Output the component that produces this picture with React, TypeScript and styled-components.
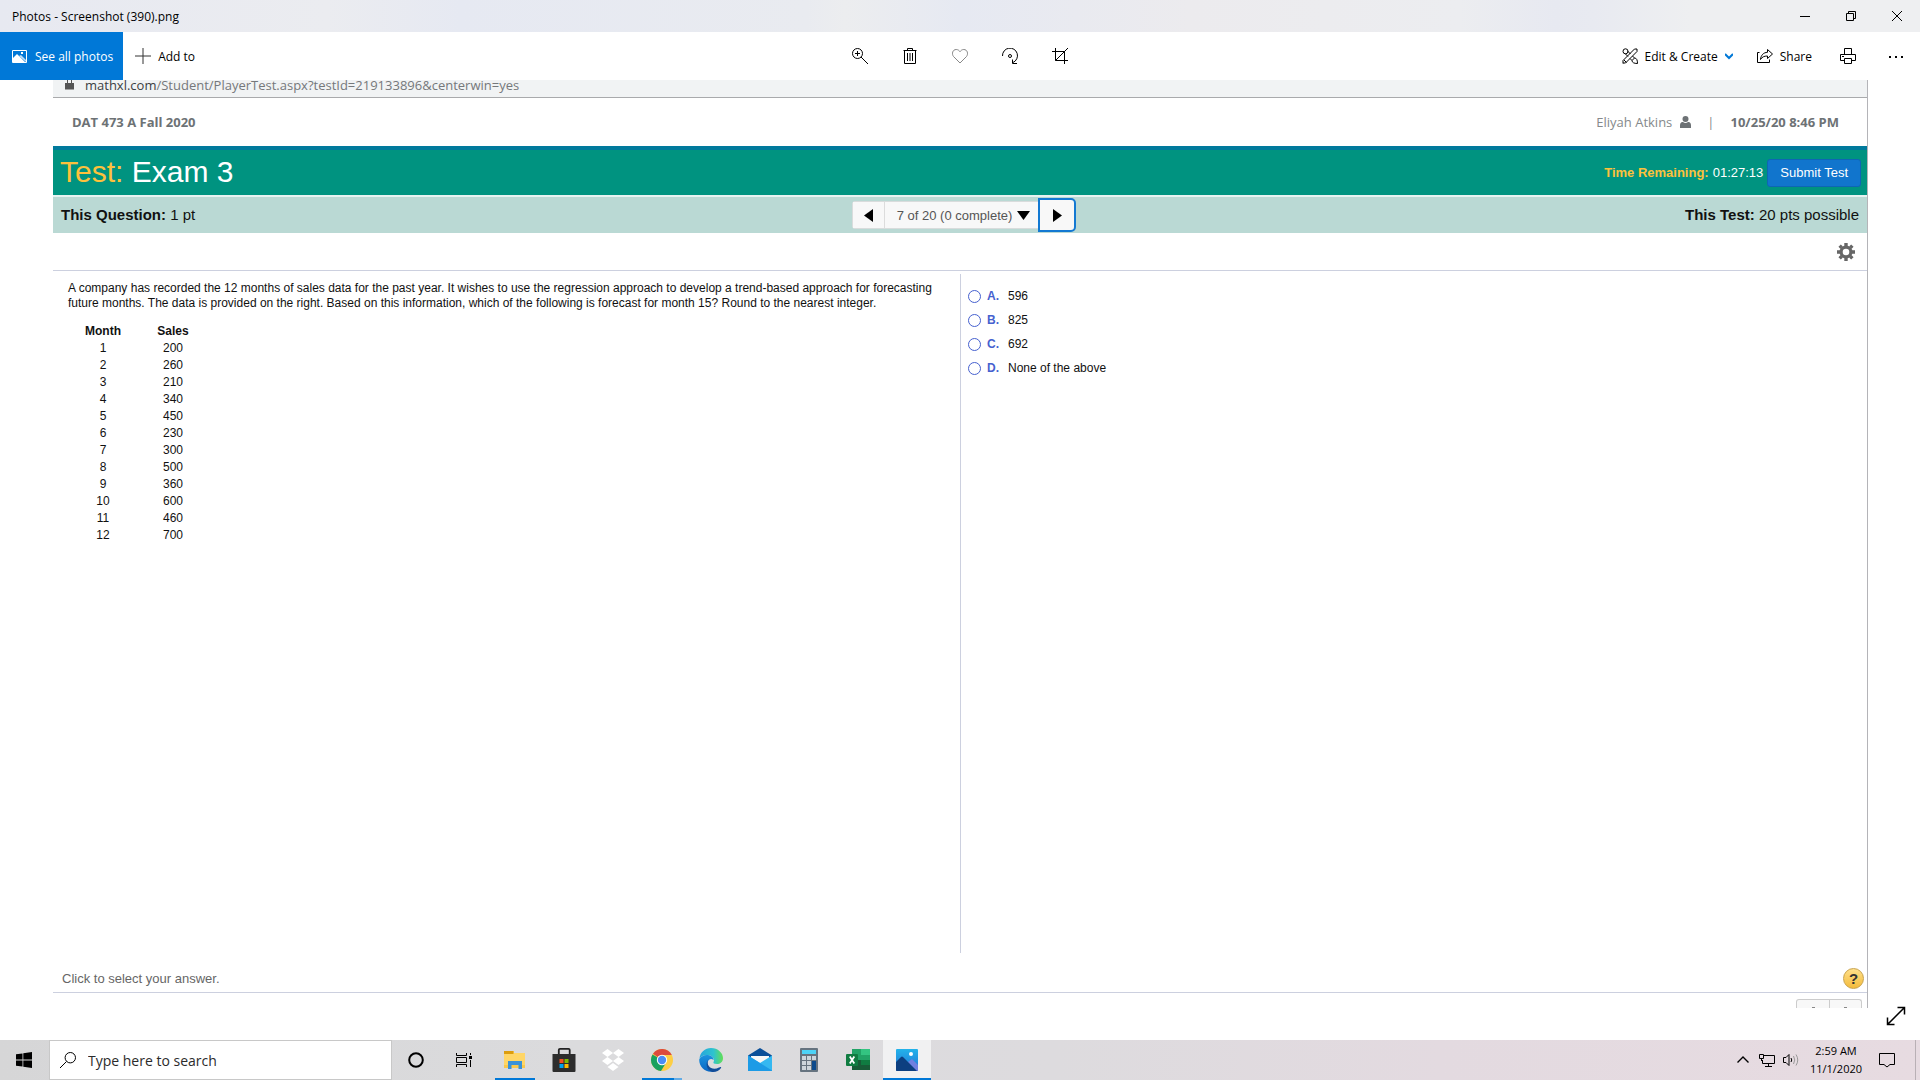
import React from 'react';
import styled, { createGlobalStyle } from 'styled-components';

const ui = '"Open Sans", "Noto Sans", sans-serif';
const arial = '"Liberation Sans", Arial, sans-serif';

const GlobalStyle = createGlobalStyle`
  *, *::before, *::after { box-sizing: border-box; }
  body { margin: 0; background: #fff; color: #000; font-family: ${ui}; font-size: 12px; }
  button, input { font: inherit; color: inherit; }
  button { border: 0; padding: 0; background: none; cursor: pointer; }
  svg { display: block; flex: none; }
`;

const Window = styled.div`
  min-height: 100vh;
  display: flex;
  flex-direction: column;
`;

const TitleBar = styled.header`
  height: 32px;
  display: flex;
  justify-content: space-between;
  align-items: center;
  padding-left: 12px;
  background: linear-gradient(90deg, #e7e9f1 0%, #ebecf0 17%, #e6e9f2 24%, #e9ebf0 42%, #ecedef 44%, #e6e9f2 50%, #ecebee 62%, #ecedf0 76%, #e7e9f1 81%, #e8eaf1 83%, #eeeff1 88%, #eeeff1 100%);
`;

const WindowTitle = styled.h1`
  margin: 0;
  font-size: 12px;
  font-weight: 400;
`;

const Row = styled.div`
  display: flex;
  align-items: center;
`;

const CaptionButton = styled.button`
  width: 46px;
  height: 32px;
  display: grid;
  place-items: center;
`;

const Toolbar = styled.nav`
  height: 48px;
  display: grid;
  grid-template-columns: 1fr auto 1fr;
  align-items: center;
  font-size: 12px;
`;

const SeeAll = styled.button`
  height: 48px;
  padding: 0 10px 0 12px;
  display: flex;
  align-items: center;
  gap: 8px;
  background: #0078d7;
  color: #fff;
  white-space: nowrap;
`;

const ToolButton = styled.button<{ $w?: number }>`
  height: 48px;
  ${p => (p.$w ? `width: ${p.$w}px;` : 'padding: 0 12px;')}
  display: flex;
  align-items: center;
  justify-content: center;
  gap: 7px;
  white-space: nowrap;
`;

const EndTools = styled(Row)`
  justify-content: flex-end;
`;

const Viewer = styled.main`
  position: relative;
  flex: 1;
  display: flex;
  padding: 0 52px 32px 53px;
`;

const Expand = styled.button`
  position: absolute;
  right: 14px;
  bottom: 14px;
`;

const Photo = styled.article`
  flex: 1;
  display: flex;
  flex-direction: column;
  overflow: hidden;
  border-right: 1px solid #b4b4b8;
  font-family: ${arial};
`;

const AddressBar = styled.div`
  height: 18px;
  display: flex;
  align-items: flex-start;
  gap: 11px;
  padding-left: 12px;
  overflow: hidden;
  background: #f1f3f4;
  border-bottom: 1px solid #a9aaac;
  color: #75787b;
  font: 13px/10px ${ui};
  b { font-weight: 400; color: #3c4043; }
`;

const CourseBar = styled.div`
  height: 48px;
  display: flex;
  align-items: center;
  justify-content: space-between;
  padding: 0 28px 0 19px;
  color: #6d7275;
  font: 13px/20px ${ui};
`;

const UserInfo = styled(Row)`
  gap: 8px;
  color: #85898b;
  b { color: #6d7275; }
`;

const Divider = styled.span`
  padding: 0 8px;
`;

const ExamBar = styled.div`
  height: 49px;
  display: flex;
  align-items: center;
  justify-content: space-between;
  padding: 0 6px 0 7px;
  background: #009380;
  border-top: 4px solid #007a9c;
  color: #fff;
`;

const ExamTitle = styled.h2`
  margin: 0;
  padding-bottom: 2px;
  font-size: 30px;
  font-weight: 400;
  span { color: #fdc13c; }
`;

const Timer = styled(Row)`
  gap: 4px;
  font-size: 13px;
  b { color: #fdc13c; }
`;

const Submit = styled.button`
  height: 28px;
  padding: 0 12px;
  background: #1175cd;
  border: 1px solid #0e66b4;
  border-radius: 3px;
`;

const QuestionBar = styled.div`
  height: 38px;
  display: grid;
  grid-template-columns: 1fr auto 1fr;
  align-items: center;
  padding: 0 8px;
  background: #bad9d4;
  border-top: 2px solid #e6f3f1;
  color: #111;
  font-size: 15px;
`;

const Points = styled.div<{ $end?: boolean }>`
  padding-bottom: 2px;
  text-align: ${p => (p.$end ? 'right' : 'left')};
`;

const Pager = styled(Row)`
  height: 28px;
  margin-left: 8px;
  background: #f8f8f8;
  border: 1px solid #d9dcdc;
  border-radius: 3px;
  color: #555;
  font-size: 13px;
`;

const PageButton = styled.button<{ $focus?: boolean }>`
  width: ${p => (p.$focus ? 38 : 32)}px;
  height: ${p => (p.$focus ? 34 : 26)}px;
  display: grid;
  place-items: center;
  background: #f8f8f8;
  ${p => p.$focus
    ? 'border: 2px solid #1379d2; border-radius: 0 5px 5px 0; margin-right: -1px;'
    : 'border-right: 1px solid #dcdcdc;'}
`;

const PageSelect = styled.button`
  height: 26px;
  display: flex;
  align-items: center;
  gap: 5px;
  padding: 0 8px 0 12px;
`;

const Settings = styled.div`
  height: 38px;
  display: flex;
  align-items: center;
  justify-content: flex-end;
  padding-right: 12px;
  border-bottom: 1px solid #ccd0df;
`;

const Columns = styled.div`
  flex: 1;
  display: grid;
  grid-template-columns: 1fr 1fr;
  padding: 3px 0 0;
`;

const Problem = styled.section`
  padding: 7px 0 0 15px;
  font-size: 12px;
  color: #111;
`;

const Prompt = styled.p`
  margin: 0 0 12px;
  line-height: 15px;
`;

const Data = styled.table`
  border-collapse: collapse;
  line-height: 17px;
  text-align: center;
  th, td { width: 70px; padding: 0; }
`;

const Choices = styled.form`
  padding: 10px 7px;
  border-left: 1px solid #ccd0df;
  font-size: 12px;
  line-height: 24px;
  color: #111;
`;

const Choice = styled.label`
  display: flex;
  align-items: center;
  b { width: 21px; margin-left: 6px; color: #4661cf; }
`;

const Radio = styled.input`
  appearance: none;
  width: 13px;
  height: 13px;
  margin: 0;
  border: 1px solid #4661cf;
  border-radius: 50%;
  background: #fff;
  &:checked { background: radial-gradient(#4661cf 45%, #fff 50%); }
`;

const Hint = styled.div`
  height: 40px;
  display: flex;
  align-items: center;
  justify-content: space-between;
  padding: 12px 3px 0 9px;
  border-bottom: 1px solid #ccd0df;
  color: #666;
  font-size: 13px;
`;

const Help = styled.button`
  width: 21px;
  height: 21px;
  border: 1px solid #c9a24a;
  border-radius: 50%;
  background: linear-gradient(#ffe08a, #f3bb3c);
  color: #333;
  font: bold 15px/19px ${arial};
`;

const PhotoEnd = styled.div`
  height: 15px;
  display: flex;
  justify-content: flex-end;
  padding: 6px 5px 0 0;
`;

const Stub = styled.div`
  width: 66px;
  display: grid;
  grid-template-columns: 1fr 1fr;
  border: 1px solid #ccc;
  border-bottom: 0;
  border-radius: 3px 3px 0 0;
  background: #f8f8f8;
`;

const StubCell = styled.span`
  display: grid;
  place-items: end center;
  & + & { border-left: 1px solid #ccc; }
  &::after { content: ''; width: 3px; height: 1px; background: #888; }
`;

const Taskbar = styled.footer`
  height: 40px;
  display: flex;
  background: linear-gradient(90deg, #d6d6d7 0%, #dbdbdd 30%, #dddbde 55%, #e3dae0 75%, #e7dbe1 100%);
`;

const Start = styled.button`
  width: 48px;
  margin-right: 1px;
  display: grid;
  place-items: center;
`;

const Search = styled.label`
  width: 343px;
  display: flex;
  align-items: center;
  gap: 12px;
  padding: 0 10px;
  background: #fff;
  border: 1px solid #c8c8c8;
`;

const SearchInput = styled.input`
  flex: 1;
  min-width: 0;
  border: 0;
  padding: 0;
  outline: 0;
  background: none;
  font-size: 14px;
  &::placeholder { color: #2b2b2b; opacity: 1; }
`;

const SystemButtons = styled.div`
  display: flex;
  margin-right: 3px;
`;

const Apps = styled.div`
  display: flex;
  gap: 1px;
`;

const TaskButton = styled.button<{ $open?: boolean; $active?: boolean; $stacked?: boolean }>`
  width: 48px;
  display: grid;
  place-items: center;
  background: ${p => (p.$active ? '#f1f1f2' : 'none')};
  box-shadow: ${p => (p.$active ? 'inset 0 -2px #0078d7' : 'none')};
  ${p => p.$open && `
    background: linear-gradient(90deg, #0078d7 ${p.$stacked ? '80%, #62abe6 80%' : '100%'}) center bottom / 40px 2px no-repeat;
  `}
`;

const Tray = styled(Row)`
  margin-left: auto;
  gap: 8px;
`;

const Clock = styled.time`
  width: 58px;
  text-align: center;
  font-size: 11px;
  line-height: 18px;
`;

const Notify = styled.button`
  width: 28px;
  height: 40px;
  display: grid;
  place-items: center;
`;

const ShowDesktop = styled.div`
  width: 5px;
  height: 40px;
  margin-left: 6px;
  border-left: 1px solid #b9b0b5;
`;

function Line({ d, size = 16, color = '#000', w = 1, children }: {
  d?: string; size?: number; color?: string; w?: number; children?: React.ReactNode;
}) {
  return (
    <svg width={size} height={size} viewBox={`0 0 ${size} ${size}`} fill="none" stroke={color} strokeWidth={w} aria-hidden="true">
      {d && <path d={d} />}
      {children}
    </svg>
  );
}

const sales = [200, 260, 210, 340, 450, 230, 300, 500, 360, 600, 460, 700];
const choices = [['A', '596'], ['B', '825'], ['C', '692'], ['D', 'None of the above']];

function Triangle({ d, w, h }: { d: string; w: number; h: number }) {
  return <svg width={w} height={h} viewBox={`0 0 ${w} ${h}`} aria-hidden="true"><path d={d} fill="#000" /></svg>;
}

function TopBars() {
  return (
    <>
      <TitleBar>
        <WindowTitle>Photos - Screenshot (390).png</WindowTitle>
        <Row>
          <CaptionButton aria-label="Minimize"><Line size={10} d="M0 5.5H10" /></CaptionButton>
          <CaptionButton aria-label="Restore"><Line size={10} d="M.5 2.5H7.5V9.5H.5ZM2.5 2.5V.5H9.5V7.5H7.5" /></CaptionButton>
          <CaptionButton aria-label="Close"><Line size={10} d="M0 0L10 10M10 0L0 10" /></CaptionButton>
        </Row>
      </TitleBar>
      <Toolbar>
        <Row>
          <SeeAll>
            <svg width="15" height="15" viewBox="0 0 15 15" aria-hidden="true">
              <path d="M.5 1.5H14.500V13.500H.5Z" fill="none" stroke="#fff" />
              <path d="M1 9L5 5L13 13H1Z" fill="#fff" />
              <path d="M7 7L9 6L14 11V13Z" fill="#fff" opacity=".75" />
              <rect x="9" y="3" width="2" height="2" fill="#fff" />
            </svg>
            See all photos
          </SeeAll>
          <ToolButton><Line d="M8 0V16M0 8H16" color="#333" />Add to</ToolButton>
        </Row>
        <Row>
          <ToolButton $w={50} aria-label="Zoom"><Line d="M9 9L16 16M3 5.500H8M5.500 3V8"><circle cx="5.500" cy="5.500" r="5" /></Line></ToolButton>
          <ToolButton $w={50} aria-label="Delete"><Line d="M1.500 2.500H14.500M5.500 2.500V.5H10.500V2.500M2.500 2.500V15.500H13.500V2.500M5.500 5V13M8 5V13M10.500 5V13" /></ToolButton>
          <ToolButton $w={50} aria-label="Favorite"><Line color="#888" d="M8 15L1.500 8.500C-.5 6 .5 1.500 4.200 1.500C6 1.500 7.200 2.500 8 3.700C8.800 2.500 10 1.500 11.800 1.500C15.500 1.500 16.500 6 14.500 8.500Z" /></ToolButton>
          <ToolButton $w={50} aria-label="Rotate"><Line d="M.5 8A7.500 7.500 0 1 1 11 14.500M15 15.500H10.500V11.500"><circle cx="8" cy="8" r="1.500" /></Line></ToolButton>
          <ToolButton $w={50} aria-label="Crop"><Line d="M3.500 0V12.500H16M0 3.500H12.500V16M3.500 12.500L16 0" /></ToolButton>
        </Row>
        <EndTools>
          <ToolButton>
            <Line d="M1 15.500V12.500L12.500 1L15 1V3.500L3.500 15H1M2 12L4.500 14.500M3 5.500L6 8.500M5.500 3L8.500 6M8 10.500L10 12.500M10.500 8L12.500 10M10 12.500C10 14.500 12 15.500 15.500 15.500C15.500 12 14.500 10 12.500 10Z"><circle cx="3.500" cy="3.300" r="2.500" /></Line>
            Edit &amp; Create
            <Line size={8} d="M0 2L4 6L8 2" color="#0078d7" w={2} />
          </ToolButton>
          <ToolButton>
            <Line d="M2.500 4.500H.5V14.500H12.500V11.500M10.500 1.500L15.500 6L10.500 10.500V8C7 8 5 9 3.500 11.500C4 7 6.500 4.500 10.500 4.300Z" />
            Share
          </ToolButton>
          <ToolButton $w={48} aria-label="Print"><Line d="M4.500 6V.5H11.500V6M4.500 12.500H.5V6.500H15.500V12.500H11.500M4.500 10.500H11.500V15.500H4.500ZM2 8.500H4" /></ToolButton>
          <ToolButton $w={48} aria-label="See more">
            <svg width="14" height="16" viewBox="0 0 14 16" aria-hidden="true"><path d="M0 8h2v2H0zM6 8h2v2H6zM12 8h2v2H12z" /></svg>
          </ToolButton>
        </EndTools>
      </Toolbar>
    </>
  );
}

function Exam() {
  return (
    <Photo>
      <AddressBar>
        <svg width="9" height="11" viewBox="0 0 9 11" aria-hidden="true"><path d="M0 3H9V9.500H0Z" fill="#555" /><path d="M2.500 4V0M6.500 4V0" stroke="#555" /></svg>
        <span><b>mathxl.com</b>/Student/PlayerTest.aspx?testId=219133896&amp;centerwin=yes</span>
      </AddressBar>
      <CourseBar>
        <b>DAT 473 A Fall 2020</b>
        <UserInfo>
          Eliyah Atkins
          <svg width="11" height="12" viewBox="0 0 11 12" fill="#6d7275" aria-hidden="true"><circle cx="5.500" cy="3" r="3" /><path d="M0 12V9C0 6.500 2 6 3 6Q5.500 8 8 6C9 6 11 6.500 11 9V12Z" /></svg>
          <Divider>|</Divider>
          <b>10/25/20 8:46 PM</b>
        </UserInfo>
      </CourseBar>
      <ExamBar>
        <ExamTitle><span>Test:</span> Exam 3</ExamTitle>
        <Timer><b>Time Remaining:</b>01:27:13<Submit>Submit Test</Submit></Timer>
      </ExamBar>
      <QuestionBar>
        <Points><b>This Question:</b> 1 pt</Points>
        <Pager>
          <PageButton aria-label="Previous question"><Triangle w={9} h={13} d="M9 0V13L0 6.500Z" /></PageButton>
          <PageSelect>7 of 20 (0 complete)<Triangle w={13} h={9} d="M0 0H13L6.500 9Z" /></PageSelect>
          <PageButton $focus aria-label="Next question"><Triangle w={9} h={13} d="M0 0L9 6.500L0 13Z" /></PageButton>
        </Pager>
        <Points $end><b>This Test:</b> 20 pts possible</Points>
      </QuestionBar>
      <Settings>
        <button aria-label="Settings">
          <svg width="18" height="18" viewBox="-9 -9 18 18" aria-hidden="true">
            <circle r="4.900" fill="none" stroke="#666" strokeWidth="3.200" />
            {[0, 45, 90, 135].map(a => <path key={a} d="M-1.700 -9H1.700V-6H-1.700ZM-1.700 9H1.700V6H-1.700Z" fill="#666" transform={`rotate(${a})`} />)}
          </svg>
        </button>
      </Settings>
      <Columns>
        <Problem>
          <Prompt>A company has recorded the 12 months of sales data for the past year. It wishes to use the regression approach to develop a trend-based approach for forecasting future months. The data is provided on the right. Based on this information, which of the following is forecast for month 15? Round to the nearest integer.</Prompt>
          <Data>
            <thead><tr><th>Month</th><th>Sales</th></tr></thead>
            <tbody>{sales.map((s, i) => <tr key={i}><td>{i + 1}</td><td>{s}</td></tr>)}</tbody>
          </Data>
        </Problem>
        <Choices>
          {choices.map(([k, t]) => <Choice key={k}><Radio type="radio" name="answer" value={k} /><b>{k}.</b>{t}</Choice>)}
        </Choices>
      </Columns>
      <Hint>Click to select your answer.<Help aria-label="Help">?</Help></Hint>
      <PhotoEnd><Stub><StubCell /><StubCell /></Stub></PhotoEnd>
    </Photo>
  );
}

function Icon({ children }: { children: React.ReactNode }) {
  return <svg width="24" height="26" viewBox="0 0 24 26" aria-hidden="true">{children}</svg>;
}

function Tasks() {
  return (
    <Taskbar>
      <Start aria-label="Start">
        <svg width="16" height="16" viewBox="0 0 16 16" aria-hidden="true"><path d="M0 2.300L6.500 1.400V7.600H0ZM7.300 1.300L16 0V7.600H7.300ZM0 8.400H6.500V14.600L0 13.700ZM7.300 8.400H16V16L7.300 14.700Z" /></svg>
      </Start>
      <Search>
        <Line d="M6.500 9.500L0 16"><circle cx="10.300" cy="5.700" r="5.200" /></Line>
        <SearchInput placeholder="Type here to search" aria-label="Search" />
      </Search>
      <SystemButtons>
        <TaskButton aria-label="Cortana"><Line w={2}><circle cx="8" cy="8" r="6.800" /></Line></TaskButton>
        <TaskButton aria-label="Task View"><Line d="M.5 1V3.500H10.500V1M.5 15V12.500H10.500V15M.5 5.500H10.500V10.500H.5ZM14.500 1V3M14.500 8V15"><rect x="13" y="4" width="3" height="3" fill="#000" stroke="none" /></Line></TaskButton>
      </SystemButtons>
      <Apps>
        <TaskButton $open aria-label="File Explorer"><Icon>
          <path d="M1 4H11V6H22V21H1Z" fill="#ffd667" /><path d="M1 4H10.500V7H1Z" fill="#dc9d0e" />
          <path d="M1 18H22V21H1Z" fill="#fac84c" /><path d="M5 14H19V22H15.500V18H8.500V22H5Z" fill="#3a92d9" />
        </Icon></TaskButton>
        <TaskButton aria-label="Microsoft Store"><Icon>
          <path d="M6.800 8V3Q6.800 1.800 8 1.800H16.500Q17.700 1.800 17.700 3V8" fill="none" stroke="#222" strokeWidth="1.800" />
          <path d="M.5 7H23.500V24Q23.500 25 22.500 25H1.500Q.5 25 .5 24Z" fill="#2d2d2d" />
          <path d="M7.500 12H11.500V16H7.500Z" fill="#f25022" /><path d="M12.500 12H16.500V16H12.500Z" fill="#7fba00" /><path d="M7.500 17H11.500V21H7.500Z" fill="#00a4ef" /><path d="M12.500 17H16.500V21H12.500Z" fill="#ffb900" />
        </Icon></TaskButton>
        <TaskButton aria-label="Dropbox"><Icon><path d="M6.500 2L12 6L6.500 10L1 6ZM17.500 2L23 6L17.500 10L12 6ZM6.500 10L12 14L6.500 18L1 14ZM17.500 10L23 14L17.500 18L12 14ZM12 16L17.500 20L12 24L6.500 20Z" fill="#fff" /></Icon></TaskButton>
        <TaskButton $open $stacked aria-label="Chrome"><Icon>
          <circle cx="12" cy="13" r="11" fill="#fdce45" />
          <path d="M12 13L2.500 7.500A11 11 0 0 0 11 24L16.500 15Z" fill="#18a15f" />
          <path d="M12 13L3 6.700A11 11 0 0 1 21.800 8H12Z" fill="#dc4a3e" />
          <circle cx="12" cy="13" r="5.200" fill="#fff" /><circle cx="12" cy="13" r="4.200" fill="#4c8df5" />
        </Icon></TaskButton>
        <TaskButton aria-label="Edge"><Icon>
          <defs>
            <linearGradient id="edgeTop" x1="0" x2="1"><stop stopColor="#25a5dc" /><stop offset=".6" stopColor="#2ec3cf" /><stop offset="1" stopColor="#63df53" /></linearGradient>
            <linearGradient id="edgeLow" x1="0" x2="0" y1="0" y2="1"><stop stopColor="#1a94e0" /><stop offset="1" stopColor="#0b66c2" /></linearGradient>
          </defs>
          <path d="M.5 12C1 5 6 1 12 1C19 1 24 6 24 11C24 15 21 17 18 17C15 17 14 16 14.500 15C15.500 14 15.500 9 9.500 8C5.500 7.500 2 9 .5 12Z" fill="url(#edgeTop)" />
          <path d="M.2 12.500C2 9 5.500 7.500 9 8C13 8.500 15 11 14.500 13C12 10.500 8 13 8.500 17C9 21 12.500 23.500 16 24C8 27 0 21 .2 12.500Z" fill="url(#edgeLow)" />
          <path d="M9 13C7 19 13 24 20 20.500C22 19.500 22.500 20 22 21C20 24 16.500 25.500 13 25C8 23 6 17 9 13Z" fill="#124d99" />
        </Icon></TaskButton>
        <TaskButton aria-label="Mail"><Icon>
          <path d="M0 8.500L12 1L24 8.500V12H0Z" fill="#0a4f99" /><path d="M3 9H21V19H3Z" fill="#f7f7f7" />
          <path d="M0 8.500L12 16L24 8.500V24H0Z" fill="#35b8f1" /><path d="M0 8.500L24 23.500V24H0Z" fill="#1c9be6" />
        </Icon></TaskButton>
        <TaskButton aria-label="Calculator"><Icon>
          <rect x="3" y="1" width="18" height="24" rx="1" fill="#66737f" /><rect x="5" y="3" width="14" height="4" fill="#4dd3f7" />
          <path d="M5 9H9V13H5ZM10 9H14V13H10ZM15 9H19V13H15ZM5 14H9V18H5ZM10 14H14V18H10ZM5 19H9V23H5ZM10 19H14V23H10Z" fill="#cdd5db" /><path d="M15 14H19V23H15Z" fill="#0d4a8c" />
        </Icon></TaskButton>
        <TaskButton aria-label="Excel"><Icon>
          <path d="M6 2H24V23H6Z" fill="#21a366" /><path d="M15 2H24V8H15Z" fill="#33c481" /><path d="M6 13H15V18H6Z" fill="#185c37" /><path d="M15 13H24V18H15Z" fill="#107c41" /><path d="M6 18H24V23H6Z" fill="#185c37" />
          <rect y="7" width="12" height="12" rx="1" fill="#107c41" />
          <path d="M3.800 9.500L8.300 16.500M8.300 9.500L3.800 16.500" stroke="#fff" strokeWidth="1.800" />
        </Icon></TaskButton>
        <TaskButton $active aria-label="Photos"><Icon>
          <defs><linearGradient id="photoSky" x1="0" x2="0" y1="0" y2="1"><stop stopColor="#23b3ea" /><stop offset="1" stopColor="#2372d6" /></linearGradient></defs>
          <rect x="1" y="2" width="22" height="22" rx="1" fill="url(#photoSky)" /><path d="M13 15L17 12L23 18V24H15Z" fill="#6f7fe0" />
          <path d="M1 15L6 10Q7 9 8 10L22 24H2Q1 24 1 23Z" fill="#0d3f80" /><circle cx="16" cy="7" r="2" fill="#fff" />
        </Icon></TaskButton>
      </Apps>
      <Tray>
        <Line d="M2.500 10.500L8 5L13.500 10.500" w={1.4} />
        <Line d="M5 3.500H15.500V11.500H3.500V8M9.500 11.500V14.500M6 14.500H13M.5 2.500H4.500V6.500H.5ZM2.500 6.500V9" />
        <Line d="M.5 5.500H3L6 2.500V13.500L3 10.500H.5ZM8 6Q9.500 8 8 10"><path d="M10.500 4Q13 8 10.500 12M13 2.500Q16.500 8 13 13.500" stroke="#999" /></Line>
        <Clock>2:59 AM<br />11/1/2020</Clock>
        <Notify aria-label="Notifications"><Line d="M.5 1.500H15.500V12.500H11L8 15L5 12.500H.5Z" /></Notify>
        <ShowDesktop />
      </Tray>
    </Taskbar>
  );
}

export default function App() {
  return (
    <>
      <GlobalStyle />
      <Window>
        <TopBars />
        <Viewer>
          <Exam />
          <Expand aria-label="Full screen"><Line size={20} w={1.5} d="M2 18L18 2M11.500 1.500H18.500V8.500M1.500 11.500V18.500H8.500" /></Expand>
        </Viewer>
        <Tasks />
      </Window>
    </>
  );
}
